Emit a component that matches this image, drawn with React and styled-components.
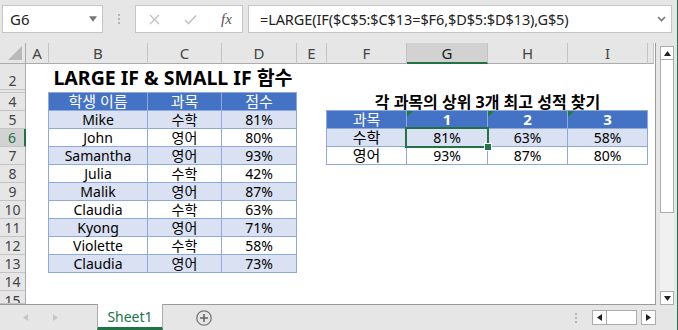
import React from 'react';
import styled, { createGlobalStyle } from 'styled-components';

const GREEN = '#217346';
const LINE = '#8ea9db';

const GlobalStyle = createGlobalStyle`
  html, body { margin: 0; padding: 0; overflow: hidden; background: #e6e6e6; }
  body { font-family: "Noto Sans", "Noto Sans CJK KR", sans-serif; }
`;

const Window = styled.div`
  width: 678px;
  height: 330px;
  box-sizing: border-box;
  border-right: 1px solid ${GREEN};
  background: #e6e6e6;
  display: flex;
  flex-direction: column;
`;

/* ---------- formula bar ---------- */

const FormulaBar = styled.div`
  height: 43px;
  flex: none;
  display: flex;
  align-items: flex-start;
  padding: 5px 5px 0 2px;
  box-sizing: border-box;
`;

const Box = styled.div`
  height: 28px;
  box-sizing: border-box;
  background: #fff;
  border: 1px solid #c6c6c6;
  display: flex;
  align-items: center;
  color: #222;
  font-size: 14px;
`;

const NameBox = styled(Box)`
  width: 101px;
  padding: 0 5px 0 7px;
  justify-content: space-between;
  font-size: 15px;
`;

const Grip = styled.div`
  width: ${p => p.$w}px;
  display: flex;
  flex-direction: column;
  align-items: center;
  justify-content: center;
  gap: 2px;
  height: ${p => p.$h}px;
  span {
    width: 2px;
    height: 2px;
    background: #b4b4b4;
  }
`;

const FnBox = styled(Box)`
  width: 108px;
  padding-left: 12px;
  gap: 23px;
`;

const FnIcon = styled.span`
  width: 13px;
  display: flex;
  justify-content: center;
  color: #555;
  font-family: "Liberation Serif", serif;
  font-style: italic;
  font-size: 15px;
`;

const FormulaInput = styled(Box)`
  flex: 1;
  margin-left: 5px;
  padding: 0 5px 0 11px;
  justify-content: space-between;
  font-size: 14.5px;
  letter-spacing: -0.1px;
`;

/* ---------- sheet ---------- */

const Main = styled.div`
  display: flex;
  height: 262px;
  flex: none;
`;

const Sheet = styled.div`
  width: 655px;
  flex: none;
  display: grid;
  grid-template-columns: 26px 23px 99px 74px 75px 30px 80px 81px 80px 80px 6px;
  grid-template-rows: 21px 26px 3px repeat(11, 18px) 13px;
  background: #fff;
  border-right: 1px solid #9b9b9b;
  border-bottom: 1px solid #9b9b9b;
  overflow: hidden;
`;

const Corner = styled.div`
  grid-column: 1;
  grid-row: 1;
  background: #e6e6e6;
  border-right: 1px solid #ababab;
  border-bottom: 1px solid #ababab;
  display: flex;
  align-items: flex-end;
  justify-content: flex-end;
  padding: 0 3px 3px 0;
`;

const ColHeader = styled.div`
  grid-row: 1;
  box-sizing: border-box;
  background: ${p => (p.$active ? '#d2d2d2' : '#e6e6e6')};
  border-right: 1px solid #c4c4c4;
  border-bottom: ${p => (p.$active ? `2px solid ${GREEN}` : '1px solid #ababab')};
  color: ${p => (p.$active ? '#1d1d1d' : '#444')};
  font-size: 15px;
  display: flex;
  align-items: center;
  justify-content: center;
`;

const RowHeader = styled.div`
  grid-column: 1;
  box-sizing: border-box;
  background: ${p => (p.$active ? '#d2d2d2' : '#e6e6e6')};
  border-bottom: 1px solid #c4c4c4;
  border-right: ${p => (p.$active ? `2px solid ${GREEN}` : '1px solid #ababab')};
  color: ${p => (p.$active ? GREEN : '#444')};
  font-size: 14px;
  line-height: 14px;
  padding: ${p => (p.$clipped ? '3px 0 0' : '0 0 1px')};
  display: flex;
  align-items: ${p => (p.$clipped ? 'flex-start' : 'flex-end')};
  justify-content: center;
  overflow: hidden;
`;

const Title = styled.div`
  grid-column: ${p => p.$col};
  grid-row: ${p => p.$row};
  font-weight: 700;
  font-size: ${p => p.$size}px;
  line-height: ${p => p.$lh}px;
  margin-bottom: 1px;
  color: #000;
  text-align: center;
  align-self: end;
  white-space: nowrap;
`;

const Table = styled.div`
  grid-column: ${p => p.$col};
  grid-row: ${p => p.$row};
  display: grid;
  grid-template-columns: ${p => p.$cols};
  grid-auto-rows: 18px;
  border-top: 1px solid ${LINE};
  border-left: 1px solid ${LINE};
  margin: -1px 0 0 -1px;
  align-self: start;
  justify-self: start;
`;

const TCell = styled.div`
  position: relative;
  box-sizing: border-box;
  background: ${p => (p.$head ? '#4472c4' : p.$band ? '#d9e1f2' : '#fff')};
  color: ${p => (p.$head ? '#fff' : '#000')};
  font-weight: ${p => (p.$bold ? 700 : 400)};
  border-right: 1px solid ${LINE};
  border-bottom: 1px solid ${LINE};
  font-size: ${p => p.$size || 14}px;
  line-height: 15px;
  display: flex;
  align-items: center;
  justify-content: center;
  white-space: nowrap;

  &::before {
    content: '';
    display: ${p => (p.$flag ? 'block' : 'none')};
    position: absolute;
    left: 0;
    top: 0;
    border-top: 6px solid #1c7d33;
    border-right: 6px solid transparent;
  }
`;

const Selection = styled.div`
  grid-column: 8;
  grid-row: 6;
  position: relative;
  z-index: 2;
  margin: -2px -1px -1px -2px;
  border: 2px solid ${GREEN};

  &::after {
    content: '';
    position: absolute;
    right: -5px;
    bottom: -5px;
    width: 6px;
    height: 6px;
    background: ${GREEN};
    border: 1px solid #fff;
  }
`;

/* ---------- scroll bars ---------- */

const VScroll = styled.div`
  width: 22px;
  box-sizing: border-box;
  padding: 3px 4px 0 4px;
  display: flex;
  flex-direction: column;
`;

const ScrollButton = styled.div`
  width: ${p => p.$w || 14}px;
  height: ${p => p.$h || 14}px;
  flex: none;
  box-sizing: border-box;
  background: #fff;
  border: 1px solid #ababab;
  display: flex;
  align-items: center;
  justify-content: center;
`;

const VThumb = styled.div`
  height: 153px;
  flex: none;
  box-sizing: border-box;
  background: #fff;
  border: 1px solid #ababab;
  border-top: none;
`;

const Track = styled.div`
  flex: 1;
  background: #f0f0f0;
`;

/* ---------- sheet tabs ---------- */

const TabBar = styled.div`
  flex: 1;
  display: flex;
  align-items: center;
`;

const NavArrow = styled.div`
  width: 8px;
  margin-left: 22px;
  display: flex;
`;

const SheetTab = styled.div`
  align-self: stretch;
  width: 66px;
  margin-left: 37px;
  margin-top: -1px;
  box-sizing: border-box;
  background: #fff;
  border-left: 1px solid #ababab;
  border-right: 1px solid #ababab;
  border-bottom: 3px solid ${GREEN};
  color: ${GREEN};
  font-size: 14px;
  display: flex;
  align-items: center;
  justify-content: center;
  padding-top: 1px;
`;

const AddSheet = styled.div`
  margin-left: 33px;
  display: flex;
`;

const Spacer = styled.div`
  flex: 1;
`;

const HScroll = styled.div`
  display: flex;
  align-items: center;
  margin: 0 21px 0 14px;
  height: 15px;
`;

const HThumb = styled.div`
  width: 30px;
  height: 15px;
  box-sizing: border-box;
  background: #fff;
  border: 1px solid #ababab;
  border-left: none;
  margin-right: 4px;
`;

/* ---------- icons ---------- */

const Tri = ({ dir, color = '#222', size = 7 }) => {
  const pts = {
    up: '0,6 7,6 3.5,1',
    down: '0,1 7,1 3.5,6',
    left: '6,0 6,7 1,3.5',
    right: '1,0 1,7 6,3.5',
  }[dir];
  return (
    <svg width={size} height={size} viewBox="0 0 7 7">
      <polygon points={pts} fill={color} />
    </svg>
  );
};

const CrossIcon = () => (
  <svg width="11" height="11" viewBox="0 0 11 11">
    <path d="M1 1 L10 10 M10 1 L1 10" stroke="#c3c3c3" strokeWidth="1.4" />
  </svg>
);

const CheckIcon = () => (
  <svg width="13" height="11" viewBox="0 0 13 11">
    <path d="M1 6 L4.5 9.5 L12 1.5" stroke="#c3c3c3" strokeWidth="1.6" fill="none" />
  </svg>
);

const Chevron = () => (
  <svg width="9" height="6" viewBox="0 0 9 6">
    <path d="M1 1 L4.5 4.5 L8 1" stroke="#777" strokeWidth="1.6" fill="none" />
  </svg>
);

const PlusCircle = () => (
  <svg width="16" height="16" viewBox="0 0 16 16">
    <circle cx="8" cy="8" r="7.2" stroke="#777" strokeWidth="1.3" fill="none" />
    <path d="M8 4 V12 M4 8 H12" stroke="#666" strokeWidth="1.6" />
  </svg>
);

/* ---------- data ---------- */

const columns = ['A', 'B', 'C', 'D', 'E', 'F', 'G', 'H', 'I', ''];
const rows = [2, 3, 4, 5, 6, 7, 8, 9, 10, 11, 12, 13, 14, 15];

const students = [
  ['Mike', '수학', '81%'],
  ['John', '영어', '80%'],
  ['Samantha', '영어', '93%'],
  ['Julia', '수학', '42%'],
  ['Malik', '영어', '87%'],
  ['Claudia', '수학', '63%'],
  ['Kyong', '영어', '71%'],
  ['Violette', '수학', '58%'],
  ['Claudia', '영어', '73%'],
];

const top3 = [
  ['수학', '81%', '63%', '58%'],
  ['영어', '93%', '87%', '80%'],
];

export default function App() {
  return (
    <>
      <GlobalStyle />
      <Window>
        <FormulaBar>
          <NameBox>
            <span>G6</span>
            <Tri dir="down" color="#777" size={8} />
          </NameBox>
          <Grip $w={32} $h={28}>
            <span />
            <span />
            <span />
          </Grip>
          <FnBox>
            <FnIcon><CrossIcon /></FnIcon>
            <FnIcon><CheckIcon /></FnIcon>
            <FnIcon>fx</FnIcon>
          </FnBox>
          <FormulaInput>
            <span>=LARGE(IF($C$5:$C$13=$F6,$D$5:$D$13),G$5)</span>
            <Chevron />
          </FormulaInput>
        </FormulaBar>

        <Main>
          <Sheet>
            <Corner>
              <svg width="14" height="14" viewBox="0 0 14 14">
                <polygon points="14,0 14,14 0,14" fill="#b9b9b9" />
              </svg>
            </Corner>
            {columns.map((c, i) => (
              <ColHeader key={i} $active={c === 'G'} style={{ gridColumn: i + 2 }}>
                {c}
              </ColHeader>
            ))}
            {rows.map(r => (
              <RowHeader key={r} $active={r === 6} $clipped={r === 15} style={{ gridRow: r }}>
                {r === 3 ? '' : r}
              </RowHeader>
            ))}

            <Title $col="3 / 6" $row={2} $size={19.5} $lh={23}>LARGE IF &amp; SMALL IF 함수</Title>

            <Table $col="3 / 6" $row="4 / 14" $cols="99px 74px 75px">
              {['학생 이름', '과목', '점수'].map(h => (
                <TCell key={h} $head $size={15}>{h}</TCell>
              ))}
              {students.map((s, i) =>
                s.map((v, j) => (
                  <TCell key={`${i}-${j}`} $band={i % 2 === 0}>{v}</TCell>
                ))
              )}
            </Table>

            <Title $col="7 / 11" $row={4} $size={16} $lh={16}>각 과목의 상위 3개 최고 성적 찾기</Title>

            <Table $col="7 / 11" $row="5 / 8" $cols="80px 81px 80px 80px">
              <TCell $head $size={15}>과목</TCell>
              {['1', '2', '3'].map(n => (
                <TCell key={n} $head $bold $flag $size={15}>{n}</TCell>
              ))}
              {top3.map((r, i) =>
                r.map((v, j) => (
                  <TCell key={`${i}-${j}`} $band={i === 0} $size={j === 0 ? 15 : 14}>
                    {v}
                  </TCell>
                ))
              )}
            </Table>

            <Selection />
          </Sheet>

          <VScroll>
            <ScrollButton><Tri dir="up" /></ScrollButton>
            <VThumb />
            <Track />
            <ScrollButton><Tri dir="down" /></ScrollButton>
          </VScroll>
        </Main>

        <TabBar>
          <NavArrow><Tri dir="left" color="#c6c6c6" /></NavArrow>
          <NavArrow><Tri dir="right" color="#c6c6c6" /></NavArrow>
          <SheetTab>Sheet1</SheetTab>
          <AddSheet><PlusCircle /></AddSheet>
          <Spacer />
          <Grip $w={4} $h={14}>
            <span />
            <span />
            <span />
          </Grip>
          <HScroll>
            <ScrollButton $w={15} $h={15}><Tri dir="left" /></ScrollButton>
            <HThumb />
            <ScrollButton $w={15} $h={15}><Tri dir="right" /></ScrollButton>
          </HScroll>
        </TabBar>
      </Window>
    </>
  );
}
